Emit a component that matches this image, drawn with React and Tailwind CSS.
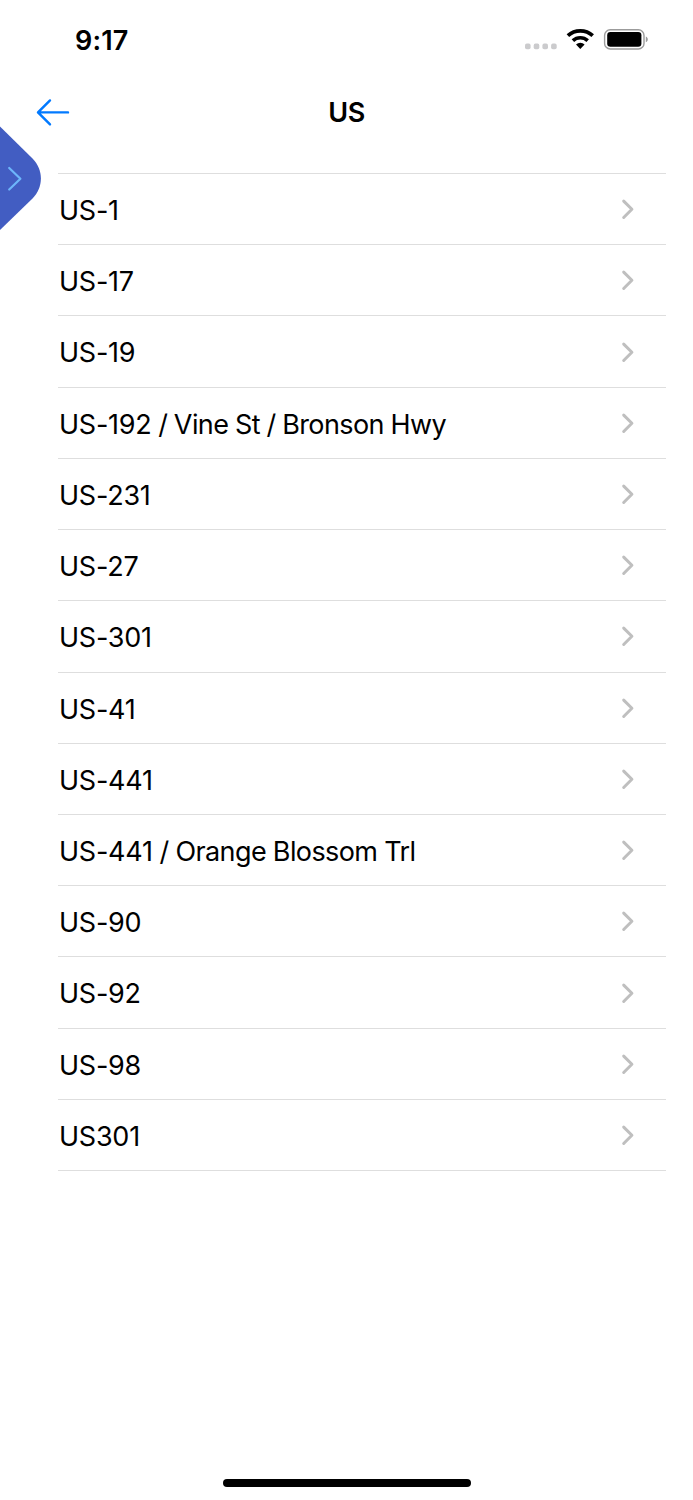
const routes = [
  { code: 'US-1' },
  { code: 'US-17' },
  { code: 'US-19' },
  { code: 'US-192', street: ' / Vine St / Bronson Hwy', spacing: '[word-spacing:-0.4px]' },
  { code: 'US-231' },
  { code: 'US-27' },
  { code: 'US-301' },
  { code: 'US-41' },
  { code: 'US-441' },
  { code: 'US-441', street: ' / Orange Blossom Trl', spacing: '[word-spacing:-0.2px]' },
  { code: 'US-90' },
  { code: 'US-92' },
  { code: 'US-98' },
  { code: 'US301' },
];

function StatusBar() {
  return (
    <div className="flex h-[78px] items-center justify-between pr-[43px] pl-[75px]">
      <span className="pt-[3px] text-[27px] leading-[32px] font-semibold tracking-[0.15px]">9:17</span>
      <svg width="126" height="26" viewBox="0 0 126 26" aria-hidden="true">
        <g fill="#cbcbcd">
          <rect x="1" y="17.6" width="5.6" height="5.6" rx="1.8" />
          <rect x="9.7" y="17.6" width="5.6" height="5.6" rx="1.8" />
          <rect x="18.4" y="17.6" width="5.6" height="5.6" rx="1.8" />
          <rect x="27.1" y="17.6" width="5.6" height="5.6" rx="1.8" />
        </g>
        <g fill="none" stroke="#000" strokeWidth="3.7">
          <path d="M43.9 9.7a18.2 18.2 0 0 1 24.8 0" />
          <path d="M48.9 14.6a11 11 0 0 1 14.8 0" />
        </g>
        <path d="M52 18.6a6.2 6.2 0 0 1 8.6 0l-4.3 4.4z" fill="#000" />
        <rect x="80.6" y="3.8" width="39.4" height="19.2" rx="5.6" fill="none" stroke="#9b9b9b" strokeWidth="1.4" />
        <rect x="83.2" y="6.1" width="34.2" height="14.6" rx="3.2" fill="#000" />
        <path d="M121.8 10.6c2.7 1.1 2.7 4.6 0 5.7z" fill="#9b9b9b" />
      </svg>
    </div>
  );
}

function Header() {
  return (
    <header className="grid h-[95.05px] grid-cols-[1fr_auto_1fr] items-start pt-[18px]">
      <button aria-label="Back" className="ml-[35px] h-[32px] w-[36px]">
        <svg width="36" height="32" viewBox="0 0 36 32" fill="none" stroke="#027aff" strokeWidth="2.4" strokeLinecap="round" strokeLinejoin="round">
          <path d="M33 16.4H3M15 4.4L3 16.4l12 12" />
        </svg>
      </button>
      <h1 className="pt-[1px] text-[27px] leading-[32px] font-semibold tracking-[-0.4px]">US</h1>
      <span />
    </header>
  );
}

function RouteRow({ code, street, spacing }) {
  return (
    <li className="flex h-[71.22px] items-center justify-between border-b border-[#dedede] pr-[30px] pl-[1px]">
      <span className={`pt-[3.8px] text-[27px] leading-[32px] whitespace-pre ${spacing ?? ''}`}>
        <span className="tracking-[-0.25px]">{code}</span>
        {street && <span className="tracking-[-0.6px]">{street}</span>}
      </span>
      <svg width="16" height="22" viewBox="0 0 16 22" fill="none" stroke="#bfbfbf" strokeWidth="3" strokeLinecap="round" strokeLinejoin="round">
        <path d="M3.7 3.1l8.2 8.2-8.2 8.2" />
      </svg>
    </li>
  );
}

function DrawerTab() {
  return (
    <button aria-label="Open drawer" className="absolute top-[120px] left-0 h-[118px] w-[42px]">
      <svg width="42" height="118" viewBox="0 0 42 118" fill="none">
        <path d="M0 6.5L32.5 38.5C43.7 50 43.7 67 32.5 78.5L0 110z" fill="#425dc2" />
        <path d="M9.2 48l11.2 10.8L9.2 69.5" stroke="#6db6fb" strokeWidth="2.2" strokeLinecap="round" strokeLinejoin="round" />
      </svg>
    </button>
  );
}

export default function App() {
  return (
    <main className="relative flex h-[1500px] w-[693px] flex-col overflow-hidden bg-white font-['Inter','Liberation_Sans',sans-serif] text-black">
      <StatusBar />
      <Header />
      <ul className="mr-[27px] ml-[58px] border-t border-[#dedede]">
        {routes.map((route, index) => (
          <RouteRow key={index} {...route} />
        ))}
      </ul>
      <div className="mx-auto mt-auto mb-[13px] h-[8px] w-[248px] rounded-full bg-black" />
      <DrawerTab />
    </main>
  );
}
